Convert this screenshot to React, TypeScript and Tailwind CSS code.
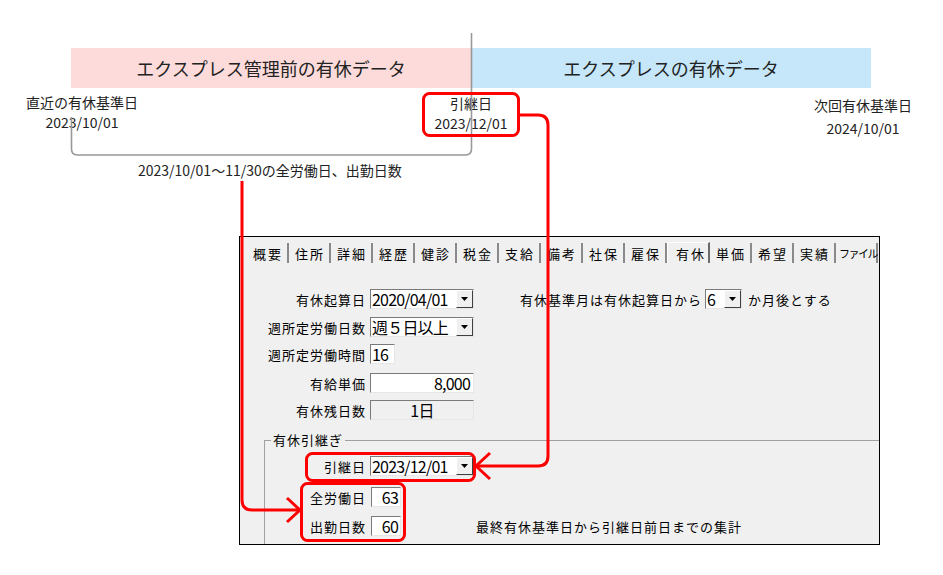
const TABS = [
  "概要",
  "住所",
  "詳細",
  "経歴",
  "健診",
  "税金",
  "支給",
  "備考",
  "社保",
  "雇保",
  "有休",
  "単価",
  "希望",
  "実績",
  "ファイル",
];

function DropButton() {
  return (
    <div className="flex h-full w-[17px] shrink-0 items-center justify-center border border-t-white border-l-white border-r-[#404040] border-b-[#404040] bg-[#f0f0f0]">
      <svg width="7" height="4" viewBox="0 0 7 4">
        <path d="M0 0H7L3.5 4Z" fill="#000" />
      </svg>
    </div>
  );
}

function Sunken({
  className,
  children,
}: {
  className: string;
  children?: React.ReactNode;
}) {
  return (
    <div
      className={`flex h-[20px] items-center whitespace-nowrap border border-t-[#7a7a7a] border-l-[#7a7a7a] border-r-[#e6e6e6] border-b-[#e6e6e6] text-[16px] leading-[18px] tracking-[-0.8px] ${className}`}
    >
      {children}
    </div>
  );
}

function DateBox({ value }: { value: string }) {
  return (
    <Sunken className="w-[104px] bg-white">
      <span className="flex-1 pl-[1px]">{value}</span>
      <DropButton />
    </Sunken>
  );
}

function FormRow({
  label,
  labelWidth,
  className = "",
  children,
}: {
  label: string;
  labelWidth: string;
  className?: string;
  children: React.ReactNode;
}) {
  return (
    <div className={`flex h-[20px] items-center whitespace-nowrap ${className}`}>
      <span className={`${labelWidth} shrink-0 text-right`}>{label}</span>
      {children}
    </div>
  );
}

function Annotations() {
  return (
    <svg
      className="pointer-events-none absolute inset-0"
      width="943"
      height="575"
      viewBox="0 0 943 575"
      fill="none"
    >
      {/* bracket + divider */}
      <path
        d="M71.5 117V149Q71.5 155 77.5 155H465.5Q471.5 155 471.5 149V33"
        stroke="#999"
        strokeWidth="1.6"
      />
      {/* handover date box + arrow */}
      <rect x="423.5" y="93.5" width="95" height="42" rx="6" stroke="#ff0000" strokeWidth="3" />
      <path
        d="M518 115H538Q548 115 548 125V456Q548 466 538 466H477"
        stroke="#ff0000"
        strokeWidth="3"
      />
      <path d="M490 453L476 466L490 479" stroke="#ff0000" strokeWidth="3" />
      {/* period totals arrow */}
      <path d="M242 181V500Q242 510 252 510H299" stroke="#ff0000" strokeWidth="3" />
      <path d="M287 498L300 510L287 522" stroke="#ff0000" strokeWidth="3" />
      {/* form highlight boxes */}
      <rect x="306.5" y="453.5" width="168" height="27" rx="6" stroke="#ff0000" strokeWidth="3" />
      <rect x="301.5" y="483.5" width="103" height="57" rx="6" stroke="#ff0000" strokeWidth="3" />
    </svg>
  );
}

export default function App() {
  return (
    <div className="relative h-[575px] w-[943px] overflow-hidden bg-white font-['Noto_Sans_CJK_JP',sans-serif] text-[#222]">
      {/* Timeline diagram */}
      <div className="relative h-[236px]">
        <div className="flex pl-[71px] pt-[48px]">
          <div className="flex h-[40px] w-[400px] items-center justify-center bg-[#fddbdb] text-[18px]">
            エクスプレス管理前の有休データ
          </div>
          <div className="flex h-[40px] w-[400px] items-center justify-center bg-[#c5e7f9] text-[18px]">
            エクスプレスの有休データ
          </div>
        </div>

        <div className="absolute left-[22px] top-[92px] flex w-[120px] flex-col items-center text-[14px] leading-[20px]">
          <span>直近の有休基準日</span>
          <span>2023/10/01</span>
        </div>
        <div className="absolute left-[423px] top-[93px] flex w-[96px] flex-col items-center text-[14px] leading-[20px]">
          <span>引継日</span>
          <span>2023/12/01</span>
        </div>
        <div className="absolute left-[808px] top-[94px] flex w-[110px] flex-col items-center text-[14px] leading-[23px]">
          <span>次回有休基準日</span>
          <span>2024/10/01</span>
        </div>
        <div className="absolute left-[138px] top-[160px] text-[14px] leading-[20px]">
          2023/10/01〜11/30の全労働日、出勤日数
        </div>
      </div>

      {/* Application window */}
      <div className="ml-[239px] flex h-[309px] w-[641px] flex-col border border-black bg-[#f0f0f0] text-[13px] leading-none tracking-[1px] text-black">
        <div className="mt-[6px] flex pl-[7px]">
          {TABS.map((tab) =>
            tab === "有休" ? (
              <div
                key={tab}
                className="-mt-[1px] flex h-[21px] w-[43px] items-center border-l border-t border-r-2 border-l-white border-t-white border-r-[#6b6b6b] pl-[8px] tracking-[2px]"
              >
                {tab}
              </div>
            ) : (
              <div
                key={tab}
                className={`flex h-[20px] w-[42px] items-center whitespace-nowrap border-r-2 border-r-[#8a8a8a] ${tab === "ファイル" ? "pl-[3px] text-[11px] tracking-[-1.5px]" : "pl-[6px] tracking-[2px]"}`}
              >
                {tab}
              </div>
            ),
          )}
        </div>

        {/* Main form */}
        <div className="mt-[26px] flex flex-col">
          <FormRow label="有休起算日" labelWidth="w-[126px]">
            <div className="ml-[4px]">
              <DateBox value="2020/04/01" />
            </div>
            <span className="ml-[46px]">有休基準月は有休起算日から</span>
            <Sunken className="ml-[3px] w-[37px] bg-white">
              <span className="flex-1 pl-[1px]">6</span>
              <DropButton />
            </Sunken>
            <span className="ml-[6px]">か月後とする</span>
          </FormRow>
          <FormRow label="週所定労働日数" labelWidth="w-[126px]" className="mt-[8px]">
            <div className="ml-[4px]">
              <DateBox value="週５日以上" />
            </div>
          </FormRow>
          <FormRow label="週所定労働時間" labelWidth="w-[126px]" className="mt-[7px]">
            <Sunken className="ml-[4px] w-[25px] bg-white pl-[1px]">16</Sunken>
          </FormRow>
          <FormRow label="有給単価" labelWidth="w-[126px]" className="mt-[9px]">
            <Sunken className="ml-[4px] w-[104px] justify-end bg-white pr-[3px]">
              8,000
            </Sunken>
          </FormRow>
          <FormRow label="有休残日数" labelWidth="w-[126px]" className="mt-[7px]">
            <Sunken className="ml-[4px] w-[104px] justify-center bg-[#f0f0f0]">1日</Sunken>
          </FormRow>
        </div>

        {/* 有休引継ぎ group */}
        <div className="relative ml-[24px] mt-[20px] flex-1 border-l border-t border-[#a0a0a0]">
          <span className="absolute -top-[8px] left-[6px] bg-[#f0f0f0] px-[2px]">有休引継ぎ</span>
          <div className="flex flex-col pt-[15px]">
            <FormRow label="引継日" labelWidth="w-[101px]">
              <div className="ml-[4px]">
                <DateBox value="2023/12/01" />
              </div>
            </FormRow>
            <FormRow label="全労働日" labelWidth="w-[101px]" className="mt-[11px]">
              <Sunken className="ml-[5px] w-[30px] justify-end bg-white pr-[2px]">63</Sunken>
            </FormRow>
            <FormRow label="出勤日数" labelWidth="w-[101px]" className="mt-[9px]">
              <Sunken className="ml-[5px] w-[30px] justify-end bg-white pr-[2px]">60</Sunken>
              <span className="ml-[75px]">最終有休基準日から引継日前日までの集計</span>
            </FormRow>
          </div>
        </div>
      </div>

      <Annotations />
    </div>
  );
}
